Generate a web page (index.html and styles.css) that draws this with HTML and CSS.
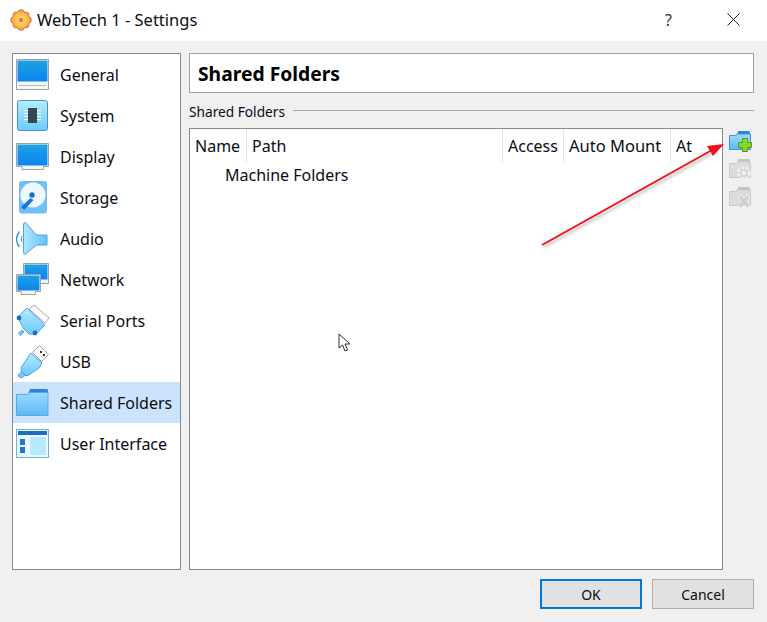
FILE: index.html
```html
<!DOCTYPE html>
<html lang="en">
<head>
<meta charset="utf-8">
<title>WebTech 1 - Settings</title>
<link rel="stylesheet" href="styles.css">
</head>
<body>
<svg class="defs" width="0" height="0" aria-hidden="true">
  <defs>
    <linearGradient id="screen" x1="0" y1="0" x2="0" y2="1"><stop offset="0" stop-color="#1ea2e4"/><stop offset="1" stop-color="#0a84f2"/></linearGradient>
    <linearGradient id="pale" x1="0" y1="0" x2="0" y2="1"><stop offset="0" stop-color="#b4ecfe"/><stop offset="1" stop-color="#6ccafc"/></linearGradient>
    <linearGradient id="speaker" x1="0" y1="0" x2="1" y2="0"><stop offset="0" stop-color="#b4e8ff"/><stop offset="1" stop-color="#62c0fb"/></linearGradient>
    <linearGradient id="folder" x1="0" y1="0" x2="0" y2="1"><stop offset="0" stop-color="#9cdcfe"/><stop offset="1" stop-color="#5bb9f9"/></linearGradient>
    <radialGradient id="gear"><stop offset="0" stop-color="#ffe27a"/><stop offset=".7" stop-color="#fbb84a"/><stop offset="1" stop-color="#f08a3c"/></radialGradient>
  </defs>
</svg>
<div class="titlebar">
  <svg class="app-icon" viewBox="0 0 22 22" width="22" height="22">
    <path d="M8.500 1.500q2.500-1.500 5 0l1 2 2.200-.5q2.300 1 2.300 2.300l-.5 2.200 2 1q1.500 2.500 0 5l-2 1 .5 2.200q-1 2.300-2.300 2.300l-2.200-.5-1 2q-2.500 1.500-5 0l-1-2-2.200.5q-2.300-1-2.300-2.300l.5-2.200-2-1q-1.500-2.500 0-5l2-1-.5-2.200q1-2.300 2.300-2.300l2.200.5z" fill="url(#gear)" stroke="#e0703c" stroke-width="1"/>
    <circle cx="11" cy="11" r="2.200" fill="#e8793a"/>
  </svg>
  <span class="title">WebTech 1 - Settings</span>
  <span class="help">?</span>
  <svg class="close" viewBox="0 0 13 13" width="13" height="13"><path d="M.5.5l12 12M12.500.5l-12 12" stroke="#222" stroke-width="1" fill="none"/></svg>
</div>
<div class="content">
  <div class="main">
    <nav class="sidebar">
      <div class="item">
        <svg class="nav-icon" viewBox="0 0 34 34"><path d="M.5 1.500h32v30H.5z" fill="#f6f6f6" stroke="#a0a0a0"/><rect x="1.500" y="2.500" width="30" height="21" fill="url(#screen)"/><path d="M3 27.500h27" stroke="#b8b8b8"/></svg>
        <span>General</span>
      </div>
      <div class="item">
        <svg class="nav-icon" viewBox="0 0 34 34"><rect x="1.500" y="1.500" width="30" height="30" rx="2" fill="url(#pale)" stroke="#4a90d9"/><path d="M8 11.500h17M8 14.500h17M8 17.500h17M8 20.500h17" stroke="#fff"/><rect x="12" y="9" width="9" height="15" fill="#37474f"/></svg>
        <span>System</span>
      </div>
      <div class="item">
        <svg class="nav-icon" viewBox="0 0 34 34"><path d="M.5 3.500h32v23h-5v3H6v-3H.5z" fill="#f6f6f6" stroke="#a0a0a0"/><rect x="1.500" y="4.500" width="30" height="21" fill="url(#screen)"/></svg>
        <span>Display</span>
      </div>
      <div class="item">
        <svg class="nav-icon" viewBox="0 0 34 34"><rect x="3.500" y=".5" width="27" height="31.500" rx="2" fill="#6dc0f8" stroke="#74b8ee"/><circle cx="17" cy="14" r="12.500" fill="#eef9fe"/><circle cx="16" cy="14" r="2.700" fill="#1a6fc4"/><path d="M14.500 17L5 26l3 3 9.500-10z" fill="#1a78d0"/></svg>
        <span>Storage</span>
      </div>
      <div class="item">
        <svg class="nav-icon" viewBox="0 0 34 34"><path d="M7.500 3q0-3 2-2.500L20.500 13h10.500v10H20.500L9.500 32q-2 .5-2-2z" fill="url(#speaker)" stroke="#4fa3ec"/><path d="M3.500 9.500c-4 4.500-4 11 0 15.500" fill="none" stroke="#3c8fe0" stroke-width="1.300"/><path d="M6 14c-1 2-1 4 0 6" fill="none" stroke="#3c8fe0"/></svg>
        <span>Audio</span>
      </div>
      <div class="item">
        <svg class="nav-icon" viewBox="0 0 34 34"><path d="M7.500.5h25v20h-8v-6h-17z" fill="#f4f4f4" stroke="#a0a0a0"/><rect x="8.500" y="1.500" width="23" height="15" fill="url(#screen)"/><path d="M.5 11.500h24v17h-5v3H5v-3H.5z" fill="#f4f4f4" stroke="#a0a0a0"/><rect x="1.500" y="12.500" width="22" height="15" fill="url(#screen)"/></svg>
        <span>Network</span>
      </div>
      <div class="item">
        <svg class="nav-icon" viewBox="0 0 34 34"><path d="M18 1l15 13-4 5L13 5z" fill="#fbfbfb" stroke="#a8a8a8"/><path d="M2 13l9-9 18 17-9 9h-7l-6-6z" fill="url(#pale)" stroke="#4fa3ec"/><path d="M6 26l-3.500 3 2 2.500L8 28z" fill="#7cc5f5" stroke="#4fa3ec"/><circle cx="3" cy="14" r="2.400" fill="#1a6fc4"/><circle cx="19" cy="29" r="2.400" fill="#1a6fc4"/></svg>
        <span>Serial Ports</span>
      </div>
      <div class="item">
        <svg class="nav-icon" viewBox="0 0 34 34"><path d="M23.500.5l9 9-7 7-9-9z" fill="#fafafa" stroke="#a0a0a0"/><rect x="24" y="6" width="2" height="2" fill="#333"/><rect x="27" y="9" width="2" height="2" fill="#333"/><path d="M15 8l11 10-3 5-11 7.500H8l-2.500-3-.5-5z" fill="url(#pale)" stroke="#4fa3ec"/><path d="M6 27l-4 3 1.500 2.500h3l3-2.500z" fill="#7cc5f5" stroke="#4fa3ec"/></svg>
        <span>USB</span>
      </div>
      <div class="item selected">
        <svg class="nav-icon" viewBox="0 0 34 34"><path d="M14 3h17l1 1v5H12z" fill="#2f80e0"/><path d="M.5 8.500h11l3-2h17.500v23H.5z" fill="url(#folder)" stroke="#5aa5e6"/></svg>
        <span>Shared Folders</span>
      </div>
      <div class="item">
        <svg class="nav-icon" viewBox="0 0 34 34"><rect x=".5" y="2.500" width="32" height="28" fill="#eafaff" stroke="#6db3e8"/><rect x="2" y="4" width="29" height="4" fill="#1c6fc0"/><rect x="14" y="10" width="16" height="18" fill="#b6eafd"/><rect x="4" y="12" width="5" height="6" fill="#1c78d0"/><rect x="4" y="20" width="5" height="6" fill="#1c78d0"/></svg>
        <span>User Interface</span>
      </div>
    </nav>
    <div class="panel">
      <div class="heading">Shared Folders</div>
      <div class="group-title"><span>Shared Folders</span><i class="rule"></i></div>
      <div class="table-row">
        <div class="table">
          <div class="thead">
            <div class="th th-name">Name</div>
            <div class="th th-path">Path</div>
            <div class="th th-access">Access</div>
            <div class="th th-mount">Auto Mount</div>
            <div class="th th-at">At</div>
          </div>
          <div class="tree-row">Machine Folders</div>
        </div>
        <div class="tools">
          <svg class="tool" viewBox="0 0 24 24"><path d="M10 1h11l1 1v4H9z" fill="#2f80e0"/><path d="M1.500 5.500h6l2-1.500h13v15.500h-21z" fill="url(#folder)" stroke="#4a90d9"/><path d="M14.500 8.500h5v4h4v5h-4v4h-5v-4h-4v-5h4z" fill="#86d926" stroke="#559f14"/></svg>
          <svg class="tool" viewBox="0 0 24 24"><path d="M10 1h11l1 1v4H9z" fill="#c4c4c4"/><path d="M1.500 5.500h6l2-1.500h13v15.500h-21z" fill="#dcdcdc" stroke="#cbcbcb"/><circle cx="16" cy="15" r="5.500" fill="#d4d4d4" stroke="#efefef" stroke-width="3" stroke-dasharray="3 1.500"/><circle cx="16" cy="15" r="2.300" fill="#eee"/></svg>
          <svg class="tool" viewBox="0 0 24 24"><path d="M10 1h11l1 1v4H9z" fill="#c4c4c4"/><path d="M1.500 5.500h6l2-1.500h13v15.500h-21z" fill="#dcdcdc" stroke="#cbcbcb"/><path d="M10 11l3-2 3 3 3-3 3 2-3 4 3 4-3 3-3-3-3 3-3-3 3-4z" fill="#d0d0d0" stroke="#eee"/></svg>
        </div>
      </div>
    </div>
  </div>
  <div class="buttons">
    <button class="btn primary">OK</button>
    <button class="btn">Cancel</button>
  </div>
</div>
<svg class="arrow" viewBox="0 0 767 622" width="767" height="622" aria-hidden="true">
  <defs><filter id="soft" x="-10%" y="-10%" width="120%" height="130%"><feGaussianBlur stdDeviation="1.500"/></filter></defs>
  <g filter="url(#soft)" opacity=".45"><path d="M544 247L716 151" stroke="#555" stroke-width="2" fill="none"/></g>
  <path d="M542 245L712 150" stroke="#f2101a" stroke-width="2" fill="none"/>
  <path d="M724 144L713 156 707 146z" fill="#f2101a"/>
</svg>
<svg class="cursor" viewBox="0 0 14 21" width="14" height="21" aria-hidden="true">
  <path d="M1 1v14l3.500-3 2.500 6 2.500-1-2.500-6h5z" fill="#fff" stroke="#2a2a35" stroke-width="1"/>
</svg>
</body>
</html>
```

FILE: styles.css
```css
* { box-sizing: border-box; }
html, body { margin: 0; padding: 0; }
body {
  position: relative;
  width: 767px;
  height: 622px;
  overflow: hidden;
  background: #f0f0f0;
  color: #0c0c14;
  font-family: "Noto Sans", "Open Sans", sans-serif;
  font-size: 16px;
}
.defs { position: absolute; }
.titlebar {
  height: 41px;
  background: #fff;
  display: flex;
  align-items: center;
  padding: 0 27px 2px 10px;
}
.app-icon { flex: none; }
.title { margin-left: 5px; flex: 1; font-size: 16.500px; }
.help { font-size: 16px; margin-right: 55px; color: #333; }
.close { flex: none; }
.content { padding: 12px 13px 0 12px; }
.main { display: flex; gap: 8px; height: 517px; }
.sidebar {
  width: 169px;
  flex: none;
  background: #fff;
  border: 1px solid #868a91;
  display: flex;
  flex-direction: column;
}
.item {
  height: 41px;
  flex: none;
  display: flex;
  align-items: center;
  padding-left: 3px;
  gap: 10px;
}
.item.selected { background: #cce4fb; }
.nav-icon { width: 34px; height: 34px; flex: none; }
.panel { flex: 1; display: flex; flex-direction: column; min-width: 0; }
.heading {
  height: 40px;
  flex: none;
  background: #fff;
  border: 1px solid #a0a0a0;
  padding-left: 8px;
  display: flex;
  align-items: center;
  font-size: 19.300px;
  font-weight: 700;
  color: #000;
}
.group-title {
  height: 35px;
  flex: none;
  display: flex;
  align-items: center;
  gap: 8px;
  font-size: 13.700px;
}
.group-title span { position: relative; top: 1px; }
.rule { flex: 1; height: 1px; background: #a8a8a8; }
.table-row { flex: 1; display: flex; gap: 5px; min-height: 0; }
.table {
  width: 534px;
  flex: none;
  background: #fff;
  border: 1px solid #868a91;
}
.thead { display: flex; height: 33px; }
.th {
  display: flex;
  align-items: center;
  padding-left: 5px;
  border-right: 1px solid #e5e5e5;
  flex: none;
}
.th-name { width: 57px; }
.th-path { width: 256px; }
.th-access { width: 61px; }
.th-mount { width: 107px; font-size: 16.500px; }
.th-at { width: 50px; border-right: 0; }
.tree-row { padding-left: 35px; line-height: 26px; }
.tools { display: flex; flex-direction: column; gap: 4px; padding-top: 2px; }
.tool { width: 24px; height: 24px; display: block; }
.buttons {
  display: flex;
  justify-content: flex-end;
  gap: 10px;
  padding-top: 9px;
}
.btn {
  width: 102px;
  height: 30px;
  background: #e1e1e1;
  border: 1px solid #adadad;
  font: inherit;
  font-size: 14px;
  color: #0c0c14;
  padding: 0;
}
.btn.primary { border: 2px solid #0078d7; }
.arrow { position: absolute; left: 0; top: 0; pointer-events: none; }
.cursor { position: absolute; left: 338px; top: 333px; }
```
